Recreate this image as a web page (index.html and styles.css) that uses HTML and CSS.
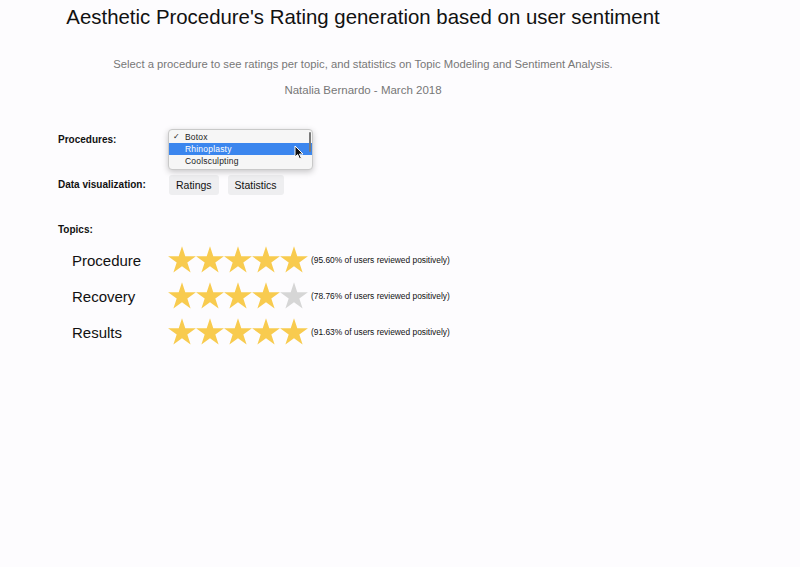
FILE: index.html
```html
<!DOCTYPE html>
<html lang="en">
<head>
  <meta charset="UTF-8">
  <title>Aesthetic Procedure's Rating</title>
  <meta name="viewport" content="width=device-width, initial-scale=1.0">
  <link rel="stylesheet" href="styles.css">
</head>
<body>
  <div class="header">
    <h1>Aesthetic Procedure's Rating generation based on user sentiment</h1>
    <p class="intro">Select a procedure to see ratings per topic, and statistics on Topic Modeling and Sentiment Analysis.</p>
    <p class="author">Natalia Bernardo - March 2018</p>
  </div>

  <div class="form">
    <div class="row row-procedures">
      <label class="row-label">Procedures:</label>
      <div class="dropdown">
        <div class="option"><span class="check">✓</span>Botox</div>
        <div class="option selected"><span class="check"></span>Rhinoplasty</div>
        <div class="option"><span class="check"></span>Coolsculpting</div>
        <span class="scrollbar"></span>
        <svg class="cursor" width="10" height="15" viewBox="0 0 10 15">
          <path d="M1 1 L1 12 L3.6 9.6 L5.6 14 L7.4 13.2 L5.5 9 L9 9 Z" fill="#111" stroke="#fff" stroke-width="1"/>
        </svg>
      </div>
    </div>

    <div class="row row-viz">
      <label class="row-label">Data visualization:</label>
      <button class="btn">Ratings</button>
      <button class="btn">Statistics</button>
    </div>

    <div class="row row-topics">
      <label class="row-label">Topics:</label>
    </div>

    <div class="topics" id="topics"></div>
  </div>

  <script>
    const topics = [
      { name: 'Procedure', stars: 5, pct: '95.60%' },
      { name: 'Recovery', stars: 4, pct: '78.76%' },
      { name: 'Results', stars: 5, pct: '91.63%' }
    ];
    const star = on => `<svg class="star" width="28" height="28" viewBox="1 1 22 22"><polygon points="12,1.1 14.58,9.05 22.94,9.05 16.18,13.96 18.76,21.9 12,16.99 5.24,21.9 7.82,13.96 1.06,9.05 9.42,9.05" fill="${on ? '#f8cb4f' : '#d6d6d6'}"/></svg>`;

    document.getElementById('topics').innerHTML = topics.map(t => {
      let stars = '';
      for (let i = 0; i < 5; i++) stars += star(i < t.stars);
      return `<div class="topic">
        <span class="topic-name">${t.name}</span>
        <span class="stars">${stars}</span>
        <span class="topic-pct">(${t.pct} of users reviewed positively)</span>
      </div>`;
    }).join('');
  </script>
</body>
</html>
```

FILE: styles.css
```css
body { margin: 0; background: #fdfcfe; font-family: "Liberation Sans", Arial, sans-serif; color: #111; }
.header { width: 726px; text-align: center; }
h1 { font-size: 20.4px; font-weight: normal; margin: 0; padding-top: 6px; line-height: 23px; }
.intro { font-size: 11.25px; color: #777; margin: 28px 0 0; line-height: 14px; }
.author { font-size: 11.5px; color: #777; margin: 12px 0 0; line-height: 14px; }

.form { padding-left: 58px; margin-top: 32px; }
.row { display: flex; }
.row-label { width: 110px; font-weight: bold; font-size: 10px; line-height: 12px; }
.row-procedures .row-label { padding-top: 5px; }
.row-viz { margin-top: 5px; align-items: center; }
.row-topics { margin-top: 29px; }

.dropdown { position: relative; width: 143px; padding: 1px 0 2px; background: #f6f6f6; border: 1px solid #c9c9c9; border-radius: 4px; box-shadow: 0 2px 6px rgba(0,0,0,0.22); }
.option { height: 12px; line-height: 12px; font-size: 8.5px; color: #222; display: flex; letter-spacing: 0.2px; }
.option.selected { background: #3b86ee; color: white; }
.check { width: 16px; text-align: center; font-size: 8px; }
.scrollbar { position: absolute; right: 1px; top: 2px; width: 2px; height: 20px; background: #7a7a7a; border-radius: 1px; }
.cursor { position: absolute; left: 125px; top: 15px; }

.btn { font-family: inherit; font-size: 10.5px; color: #111; background: #eeeef0; border: none; border-radius: 3px; height: 20px; padding: 0 7px; margin-right: 9px; }
.btn:first-of-type { margin-left: 1px; }

.topics { margin-top: 6px; }
.topic { display: flex; align-items: center; height: 36px; padding-left: 14px; }
.topic-name { width: 96px; font-size: 15px; }
.stars { display: flex; }
.star { display: block; }
.topic-pct { font-size: 8.4px; margin-left: 3px; }
```
